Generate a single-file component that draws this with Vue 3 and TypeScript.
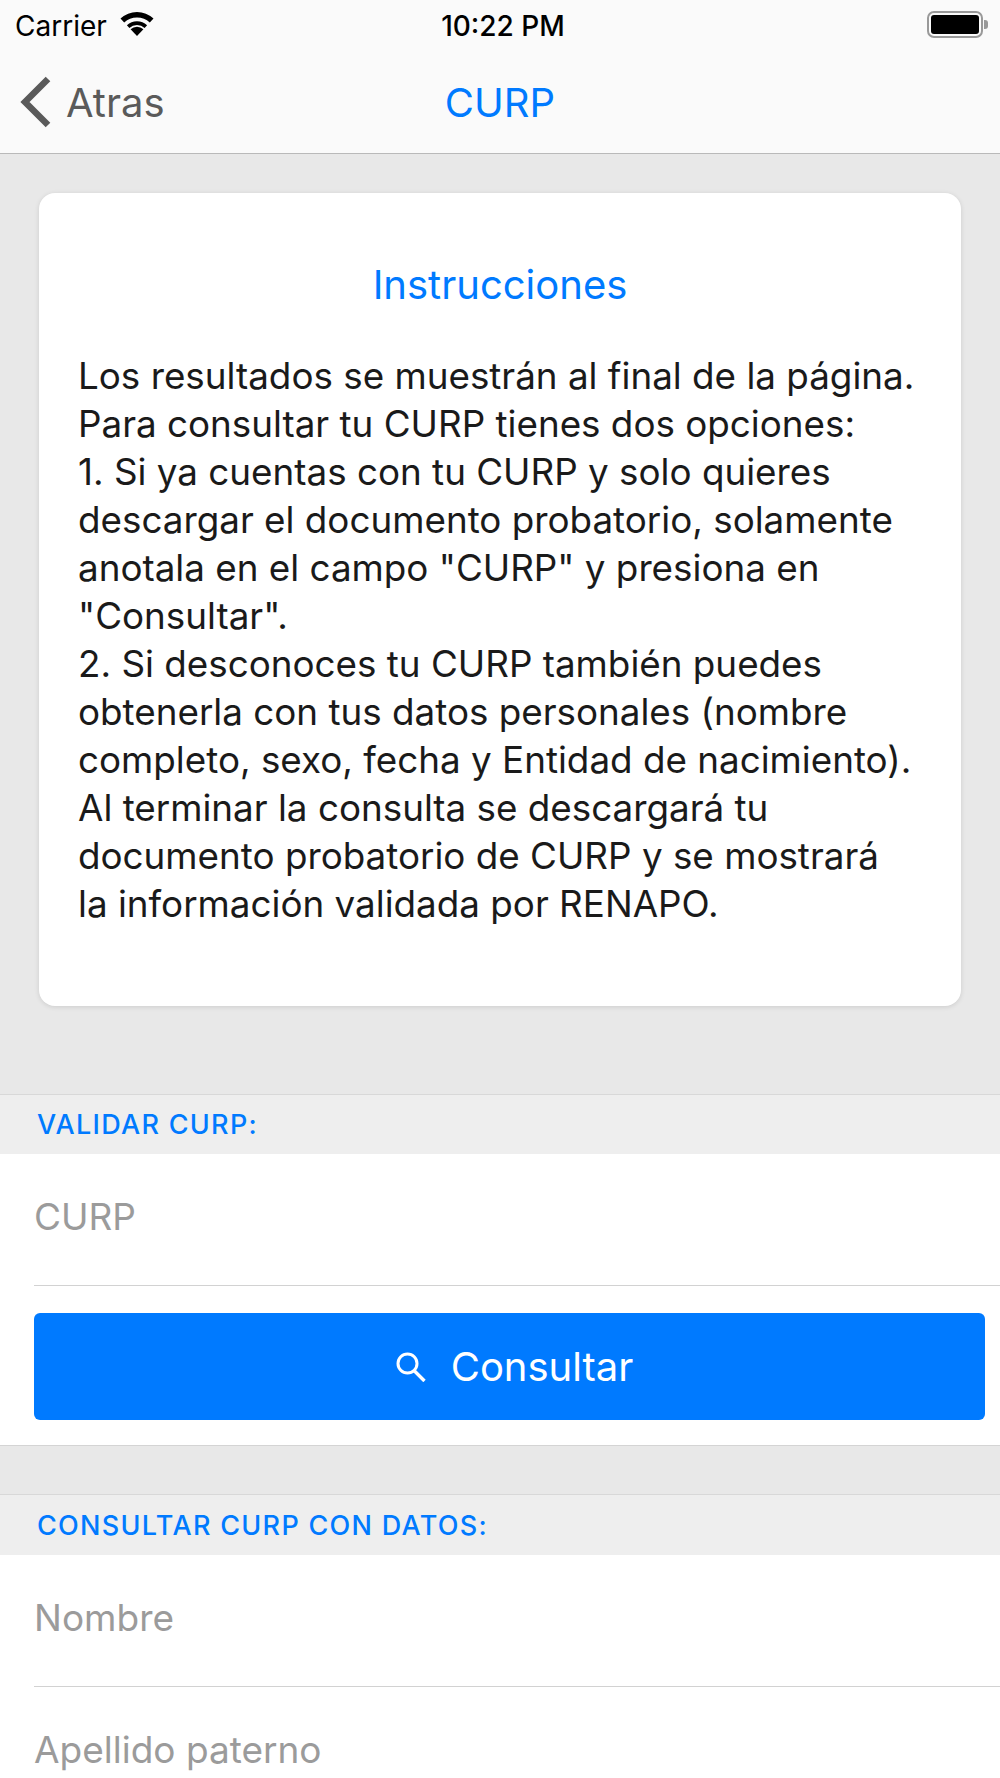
<template>
  <div class="screen">
    <header class="nav-wrap">
      <div class="status-bar">
        <div class="status-left">
          <span class="carrier">Carrier</span>
          <svg class="wifi" width="36" height="26" viewBox="0 0 36 26">
            <path d="M18 25 L11.6 18.2 A9.4 9.4 0 0 1 24.4 18.2 Z" fill="#000" />
            <path d="M7.9 14.3 A14.8 14.8 0 0 1 28.1 14.3 L25.6 17 A11.2 11.2 0 0 0 10.4 17 Z" fill="#000" />
            <path d="M1.5 7.6 A24 24 0 0 1 34.5 7.6 L30.8 11.5 A18.6 18.6 0 0 0 5.2 11.5 Z" fill="#000" />
          </svg>
        </div>
        <span class="clock">10:22 PM</span>
        <div class="battery">
          <div class="battery-body"><div class="battery-fill"></div></div>
          <div class="battery-tip"></div>
        </div>
      </div>
      <div class="nav-bar">
        <div class="back">
          <svg width="32" height="52" viewBox="0 0 32 52">
            <path d="M29 3 L6 26 L29 49" fill="none" stroke="#5a5a5a" stroke-width="6.5" />
          </svg>
          <span>Atras</span>
        </div>
        <h1 class="title">CURP</h1>
      </div>
    </header>

    <main class="content">
      <section class="card">
        <h2 class="card-title">Instrucciones</h2>
        <p class="card-text">
          <span v-for="line in instructions" :key="line" class="line">{{ line }}</span>
        </p>
      </section>

      <div class="section-head first">VALIDAR CURP:</div>
      <section class="group">
        <div class="field">CURP</div>
        <button class="search-btn" type="button">
          <svg width="30" height="30" viewBox="0 0 30 30">
            <circle cx="11.5" cy="11.5" r="9.5" fill="none" stroke="#fff" stroke-width="3" />
            <path d="M18 18.5 L28.5 29" stroke="#fff" stroke-width="3.4" fill="none" />
          </svg>
          <span>Consultar</span>
        </button>
      </section>

      <div class="section-head second">CONSULTAR CURP CON DATOS:</div>
      <section class="group plain">
        <div class="field">Nombre</div>
        <div class="field">Apellido paterno</div>
      </section>
    </main>
  </div>
</template>

<script setup lang="ts">
const instructions: string[] = [
  'Los resultados se muestrán al final de la página.',
  'Para consultar tu CURP tienes dos opciones:',
  '1. Si ya cuentas con tu CURP y solo quieres',
  'descargar el documento probatorio, solamente',
  'anotala en el campo "CURP" y presiona en',
  '"Consultar".',
  '2. Si desconoces tu CURP también puedes',
  'obtenerla con tus datos personales (nombre',
  'completo, sexo, fecha y Entidad de nacimiento).',
  'Al terminar la consulta se descargará tu',
  'documento probatorio de CURP y se mostrará',
  'la información validada por RENAPO.'
]
</script>

<style>
html, body {
  margin: 0;
  padding: 0;
  overflow: hidden;
}
</style>

<style scoped>
.screen {
  width: 1000px;
  height: 1778px;
  overflow: hidden;
  background: #e8e8e8;
  font-family: Inter, "Liberation Sans", sans-serif;
}

.nav-wrap {
  height: 153px;
  background: #fafafa;
  border-bottom: 1.5px solid #b9b9b9;
  box-sizing: content-box;
}

.status-bar {
  height: 51px;
  display: flex;
  align-items: center;
  justify-content: space-between;
  padding: 0 12px 0 15px;
  position: relative;
  color: #000;
}

.status-left {
  display: flex;
  align-items: center;
  gap: 12px;
}

.carrier {
  font-size: 28px;
}

.wifi {
  margin-top: -4px;
}

.clock {
  position: absolute;
  left: 6px;
  right: 0;
  text-align: center;
  font-size: 28px;
  font-weight: 500;
}

.battery {
  display: flex;
  align-items: center;
  gap: 1px;
  margin-top: -2px;
}

.battery-body {
  width: 56px;
  height: 27px;
  box-sizing: border-box;
  border: 2px solid #999;
  border-radius: 7px;
  padding: 2px;
}

.battery-fill {
  width: 100%;
  height: 100%;
  background: #000;
  border-radius: 3px;
}

.battery-tip {
  width: 4px;
  height: 9px;
  background: #999;
  border-radius: 0 3px 3px 0;
}

.nav-bar {
  height: 102px;
  position: relative;
  display: flex;
  align-items: center;
}

.back {
  display: flex;
  align-items: center;
  gap: 15px;
  padding-left: 19px;
  color: #5a5a5a;
  font-size: 40px;
}

.title {
  position: absolute;
  left: 0;
  right: 0;
  margin: 0;
  text-align: center;
  color: #007aff;
  font-size: 40px;
  font-weight: 400;
}

.card {
  margin: 39px 39px 0;
  height: 813px;
  box-sizing: border-box;
  background: #fff;
  border-radius: 16px;
  box-shadow: 0 1px 5px rgba(0, 0, 0, 0.12);
  padding: 68px 39px 0;
}

.card-title {
  margin: 0 0 43px;
  text-align: center;
  color: #007aff;
  font-size: 40px;
  line-height: 48px;
  font-weight: 400;
}

.card-text {
  margin: 0;
  color: #1a1a1a;
  font-size: 36.8px;
  line-height: 48px;
}

.line {
  display: block;
  white-space: nowrap;
}

.section-head {
  height: 60px;
  box-sizing: content-box;
  display: flex;
  align-items: center;
  padding-left: 37px;
  background: #eee;
  border-top: 1.5px solid #d8d8d8;
  color: #007aff;
  font-size: 27px;
  font-weight: 500;
  letter-spacing: 1.3px;
}

.section-head.first {
  height: 59px;
  margin-top: 88px;
}

.section-head.second {
  margin-top: 48px;
}

.group {
  background: #fff;
  padding-left: 34px;
  padding-bottom: 25px;
  border-bottom: 1.5px solid #d4d4d4;
}

.group.plain {
  border-bottom: 0;
}

.field {
  height: 125px;
  padding-bottom: 6px;
  box-sizing: content-box;
  display: flex;
  align-items: center;
  color: #9b9b9b;
  font-size: 37px;
  border-bottom: 1.5px solid #d2d2d2;
}

.search-btn {
  display: flex;
  align-items: center;
  justify-content: center;
  gap: 25px;
  width: 951px;
  height: 107px;
  margin-top: 27px;
  padding: 0 0 0 10px;
  border: 0;
  border-radius: 6px;
  background: #007aff;
  color: #fff;
  font-family: inherit;
  font-size: 40px;
}
</style>
